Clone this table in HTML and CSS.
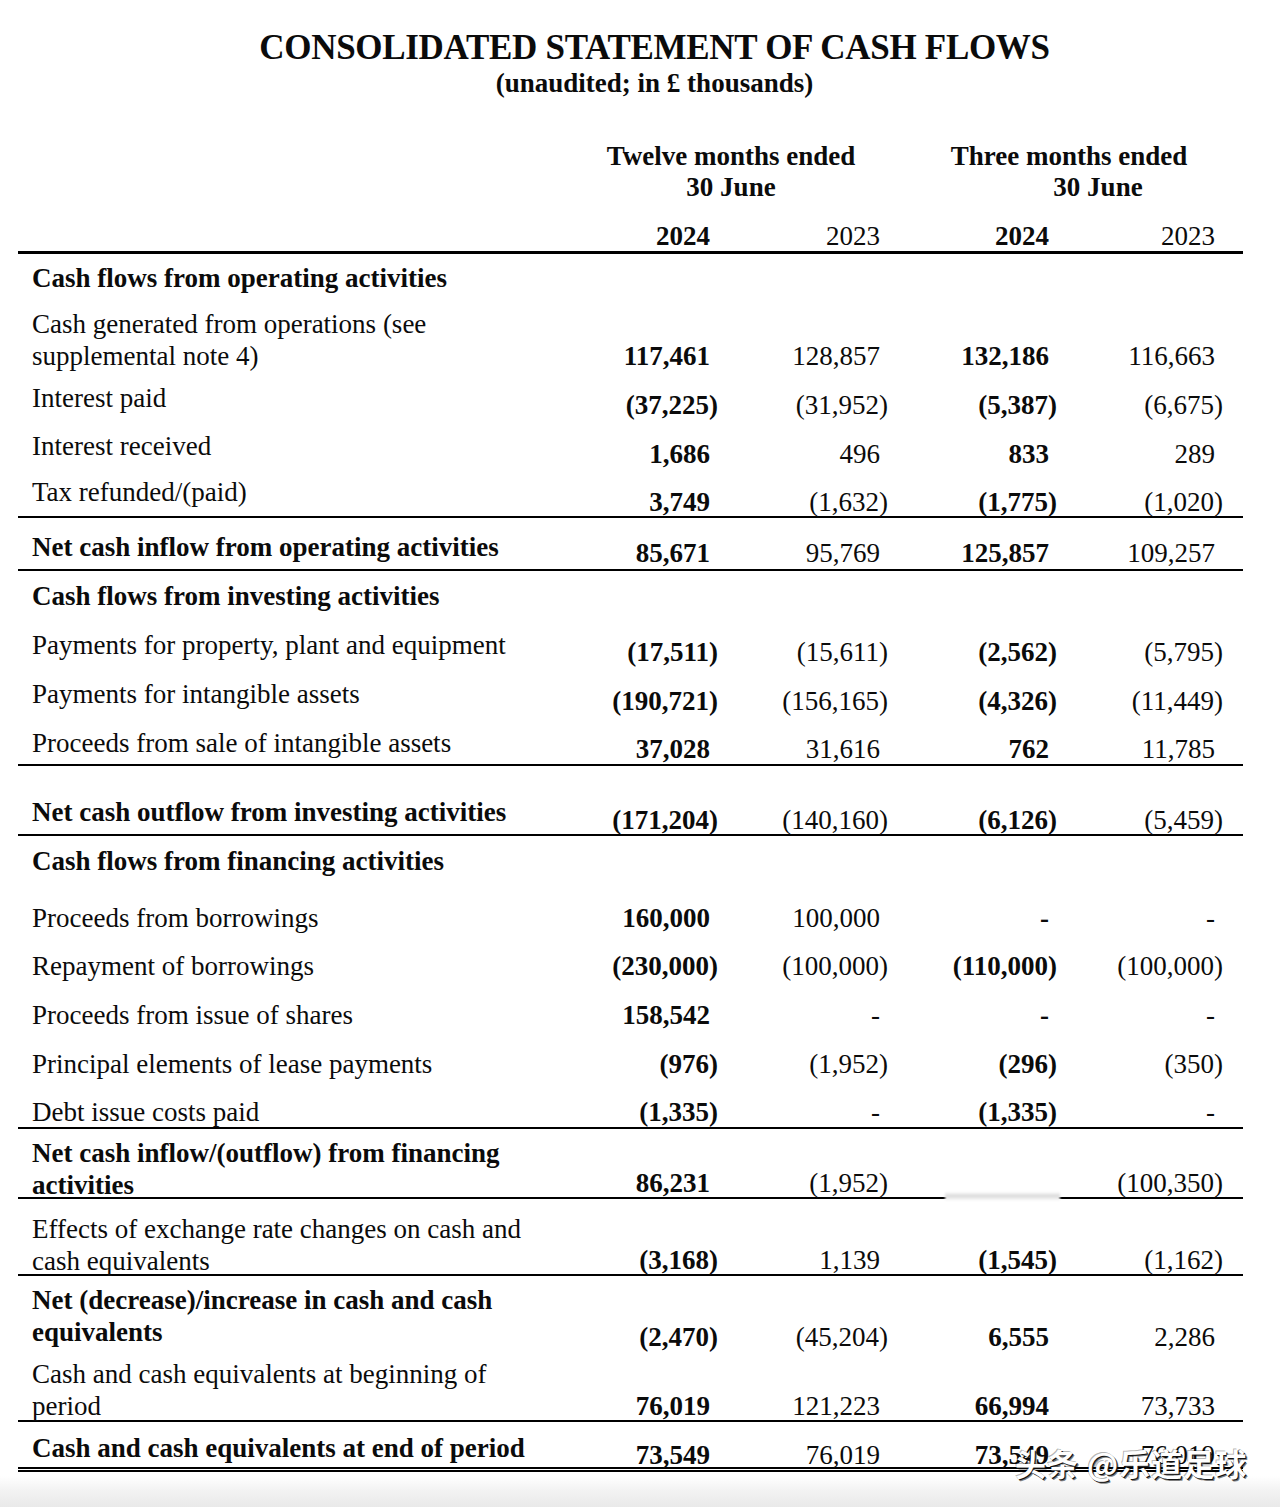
FILE: index.html
```html
<!DOCTYPE html>
<html lang="en">
<head>
<meta charset="utf-8">
<title>Consolidated Statement of Cash Flows</title>
<link rel="stylesheet" href="styles.css">
</head>
<body>
<div class="page">
  <h1 class="title">CONSOLIDATED STATEMENT OF CASH FLOWS</h1>
  <div class="subtitle">(unaudited; in £ thousands)</div>

  <div class="colhead">
    <div class="grp g1"><div>Twelve months ended</div><div>30 June</div></div>
    <div class="grp g2"><div class="l1">Three months ended</div><div class="l2">30 June</div></div>
  </div>

  <div class="row years">
    <div class="lbl"></div>
    <div class="num p b">2024</div>
    <div class="num p">2023</div>
    <div class="num p b">2024</div>
    <div class="num p">2023</div>
  </div>

  <div class="row sec h46"><div class="lbl b lt8">Cash flows from operating activities</div></div>

  <div class="row h78">
    <div class="lbl lt8">Cash generated from operations (see<br>supplemental note 4)</div>
    <div class="num p b nt40">117,461</div><div class="num p nt40">128,857</div>
    <div class="num p b nt40">132,186</div><div class="num p nt40">116,663</div>
  </div>
  <div class="row h48">
    <div class="lbl lt4">Interest paid</div>
    <div class="num b nt11">(37,225)</div><div class="num nt11">(31,952)</div>
    <div class="num b nt11">(5,387)</div><div class="num nt11">(6,675)</div>
  </div>
  <div class="row h48">
    <div class="lbl lt4">Interest received</div>
    <div class="num p b nt12">1,686</div><div class="num p nt12">496</div>
    <div class="num p b nt12">833</div><div class="num p nt12">289</div>
  </div>
  <div class="row h44 rule">
    <div class="lbl lt2">Tax refunded/(paid)</div>
    <div class="num p b nt12">3,749</div><div class="num nt12">(1,632)</div>
    <div class="num b nt12">(1,775)</div><div class="num nt12">(1,020)</div>
  </div>
  <div class="row h53 rule">
    <div class="lbl b lt13">Net cash inflow from operating activities</div>
    <div class="num p b nt19">85,671</div><div class="num p nt19">95,769</div>
    <div class="num p b nt19">125,857</div><div class="num p nt19">109,257</div>
  </div>

  <div class="row sec h50"><div class="lbl b lt9">Cash flows from investing activities</div></div>

  <div class="row h49">
    <div class="lbl lt8">Payments for property, plant and equipment</div>
    <div class="num b nt15">(17,511)</div><div class="num nt15">(15,611)</div>
    <div class="num b nt15">(2,562)</div><div class="num nt15">(5,795)</div>
  </div>
  <div class="row h49">
    <div class="lbl lt8">Payments for intangible assets</div>
    <div class="num b nt15">(190,721)</div><div class="num nt15">(156,165)</div>
    <div class="num b nt15">(4,326)</div><div class="num nt15">(11,449)</div>
  </div>
  <div class="row h47 rule">
    <div class="lbl lt8">Proceeds from sale of intangible assets</div>
    <div class="num p b nt14">37,028</div><div class="num p nt14">31,616</div>
    <div class="num p b nt14">762</div><div class="num p nt14">11,785</div>
  </div>
  <div class="row h70 rule">
    <div class="lbl b lt30">Net cash outflow from investing activities</div>
    <div class="num b nt38">(171,204)</div><div class="num nt38">(140,160)</div>
    <div class="num b nt38">(6,126)</div><div class="num nt38">(5,459)</div>
  </div>

  <div class="row sec h58"><div class="lbl b lt9">Cash flows from financing activities</div></div>

  <div class="row h48">
    <div class="lbl lt8">Proceeds from borrowings</div>
    <div class="num p b nt8">160,000</div><div class="num p nt8">100,000</div>
    <div class="num p b nt8">-</div><div class="num p nt8">-</div>
  </div>
  <div class="row h49">
    <div class="lbl lt8">Repayment of borrowings</div>
    <div class="num b nt8">(230,000)</div><div class="num nt8">(100,000)</div>
    <div class="num b nt8">(110,000)</div><div class="num nt8">(100,000)</div>
  </div>
  <div class="row h49">
    <div class="lbl lt8">Proceeds from issue of shares</div>
    <div class="num p b nt8">158,542</div><div class="num p nt8">-</div>
    <div class="num p b nt8">-</div><div class="num p nt8">-</div>
  </div>
  <div class="row h48">
    <div class="lbl lt8">Principal elements of lease payments</div>
    <div class="num b nt8">(976)</div><div class="num nt8">(1,952)</div>
    <div class="num b nt8">(296)</div><div class="num nt8">(350)</div>
  </div>
  <div class="row h41 rule">
    <div class="lbl lt8">Debt issue costs paid</div>
    <div class="num b nt8">(1,335)</div><div class="num p nt8">-</div>
    <div class="num b nt8">(1,335)</div><div class="num p nt8">-</div>
  </div>
  <div class="row h70 rule">
    <div class="lbl b lt8">Net cash inflow/(outflow) from financing<br>activities</div>
    <div class="num p b nt38">86,231</div><div class="num nt38">(1,952)</div>
    <div class="num p b nt38"></div><div class="num nt38">(100,350)</div>
    <div class="smudge"></div>
  </div>
  <div class="row h77 rule">
    <div class="lbl lt14">Effects of exchange rate changes on cash and<br>cash equivalents</div>
    <div class="num b nt45">(3,168)</div><div class="num p nt45">1,139</div>
    <div class="num b nt45">(1,545)</div><div class="num nt45">(1,162)</div>
  </div>
  <div class="row h82">
    <div class="lbl b lt8">Net (decrease)/increase in cash and cash<br>equivalents</div>
    <div class="num b nt45">(2,470)</div><div class="num nt45">(45,204)</div>
    <div class="num p b nt45">6,555</div><div class="num p nt45">2,286</div>
  </div>
  <div class="row h64 rule">
    <div class="lbl lt0">Cash and cash equivalents at beginning of<br>period</div>
    <div class="num p b nt32">76,019</div><div class="num p nt32">121,223</div>
    <div class="num p b nt32">66,994</div><div class="num p nt32">73,733</div>
  </div>
  <div class="row h50 dbl">
    <div class="lbl b lt10">Cash and cash equivalents at end of period</div>
    <div class="num p b nt17">73,549</div><div class="num p nt17">76,019</div>
    <div class="num p b nt17">73,549</div><div class="num p nt17">76,019</div>
    <div class="watermark">头条 @乐道足球</div>
  </div>
</div>
</body>
</html>
```

FILE: styles.css
```css
html, body {
  margin: 0;
  padding: 0;
}
body {
  background: linear-gradient(to bottom, #ffffff 0, #ffffff 1476px, #f3f3f3 1490px, #e9e9e9 1507px);
  color: #0b0b0b;
  font-family: "Liberation Serif", "Times New Roman", serif;
  font-size: 27px;
  min-height: 1507px;
}
.page {
  padding: 0 37px 0 18px;
  width: 1225px;
}
.title {
  margin: 0;
  padding: 28px 0 0 48px;
  font-size: 35px;
  letter-spacing: -0.3px;
  line-height: 40px;
  font-weight: bold;
  text-align: center;
}
.subtitle {
  padding-left: 48px;
  line-height: 30px;
  font-weight: bold;
  text-align: center;
}
.colhead {
  display: grid;
  grid-template-columns: 530px 170px 170px 169px 166px 20px;
  margin-top: 43px;
  font-weight: bold;
  line-height: 31px;
}
.grp { text-align: center; }
.g1 { grid-column: 2 / 4; padding-left: 26px; }
.g2 { grid-column: 4 / 6; }
.g2 .l1 { padding-left: 27px; }
.g2 .l2 { padding-left: 85px; }

.row {
  position: relative;
  display: grid;
  grid-template-columns: 530px 170px 170px 169px 166px 20px;
  align-items: start;
  box-sizing: border-box;
  line-height: 32px;
}
.years {
  margin-top: 18px;
  line-height: 30px;
  height: 33px;
  border-bottom: 3px solid #000;
}
.rule { border-bottom: 2px solid #000; }
.dbl { border-bottom: 5px double #000; }

.lbl {
  padding-left: 14px;
  white-space: nowrap;
}
.num {
  text-align: right;
  white-space: nowrap;
}
.p { padding-right: 8px; }
.b { font-weight: bold; }

.h41 { height: 41px; }
.h44 { height: 44px; }
.h46 { height: 46px; }
.h47 { height: 47px; }
.h48 { height: 48px; }
.h49 { height: 49px; }
.h50 { height: 50px; }
.h53 { height: 53px; }
.h58 { height: 58px; }
.h64 { height: 64px; }
.h70 { height: 70px; }
.h77 { height: 77px; }
.h78 { height: 78px; }
.h82 { height: 82px; }

.lt0 { padding-top: 0; }
.lt2 { padding-top: 2px; }
.lt4 { padding-top: 4px; }
.lt8 { padding-top: 8px; }
.lt9 { padding-top: 9px; }
.lt10 { padding-top: 10px; }
.lt13 { padding-top: 13px; }
.lt14 { padding-top: 14px; }
.lt30 { padding-top: 30px; }

.nt8 { padding-top: 8px; }
.nt11 { padding-top: 11px; }
.nt12 { padding-top: 12px; }
.nt14 { padding-top: 14px; }
.nt15 { padding-top: 15px; }
.nt17 { padding-top: 17px; }
.nt19 { padding-top: 19px; }
.nt32 { padding-top: 32px; }
.nt38 { padding-top: 38px; }
.nt40 { padding-top: 40px; }
.nt45 { padding-top: 45px; }

.smudge {
  position: absolute;
  left: 927px;
  top: 30px;
  width: 115px;
  height: 42px;
  background: linear-gradient(to bottom, #ffffff 0, #ffffff 78%, #d9d9d9 88%, #f4f4f4 96%, #ffffff 100%);
  filter: blur(1px);
}

.watermark {
  position: absolute;
  left: 997px;
  top: 24px;
  font-family: "Noto Sans CJK SC", sans-serif;
  font-size: 31px;
  font-weight: bold;
  line-height: 34px;
  letter-spacing: 1px;
  color: #ffffff;
  white-space: nowrap;
  text-shadow: 1px 1px 0 #111, 2px 2px 0 rgba(0,0,0,0.5), -1px -1px 0 rgba(0,0,0,0.3);
}
```
